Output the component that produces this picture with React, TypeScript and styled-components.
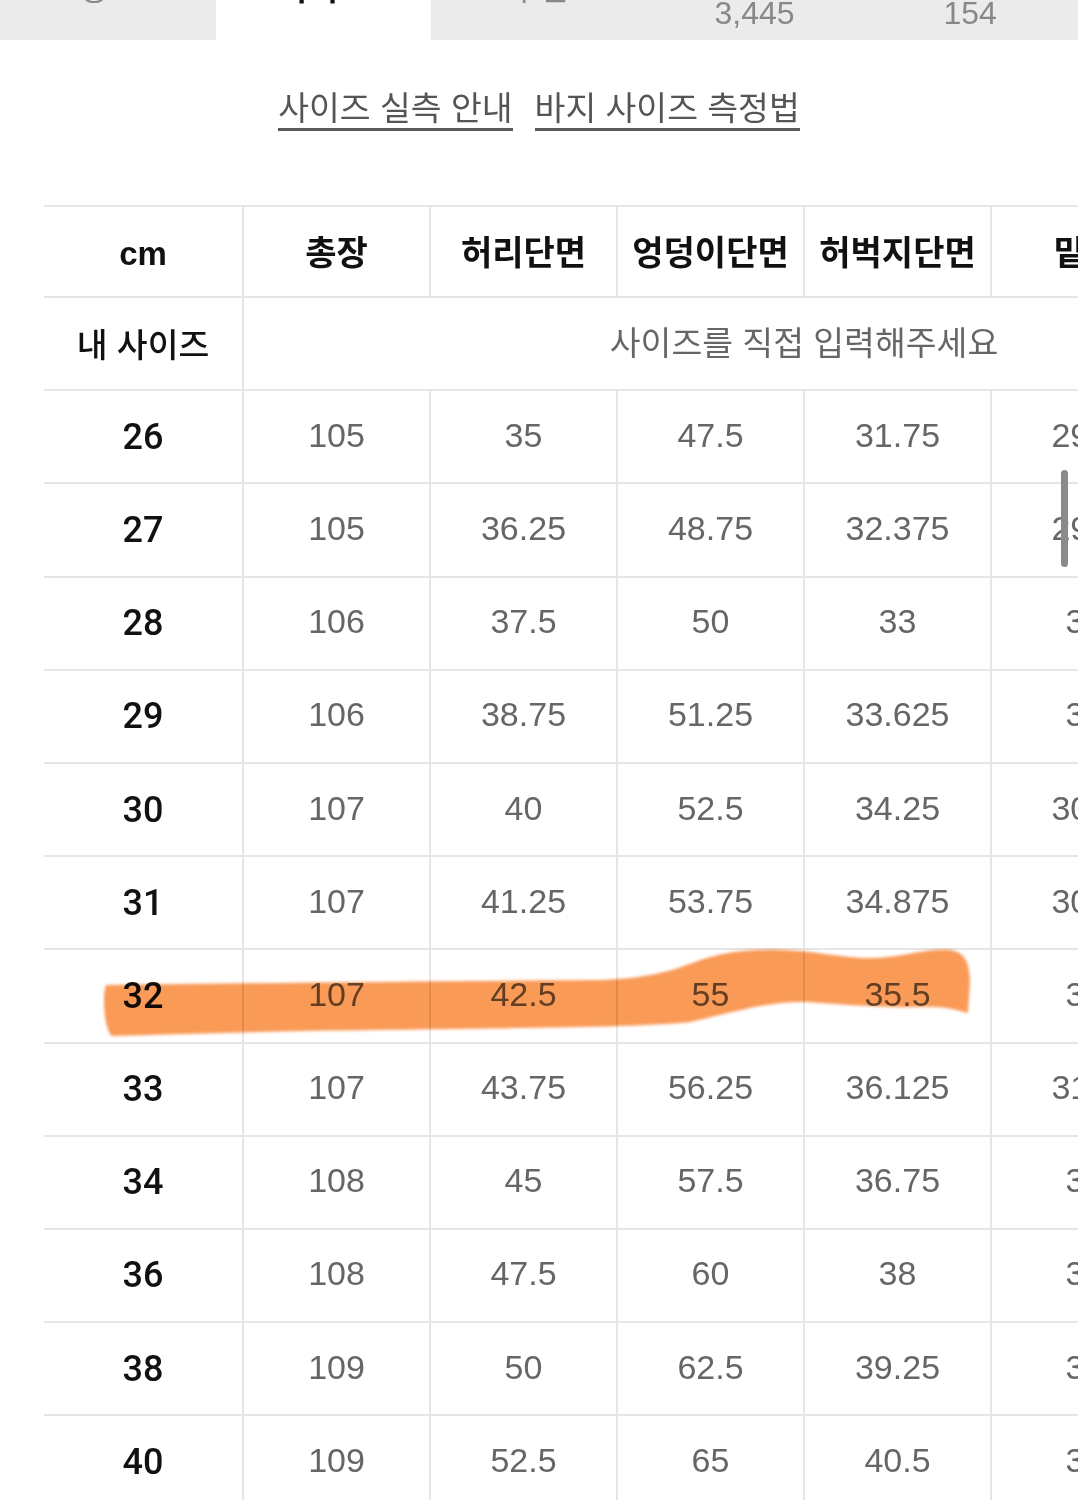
import React from "react";
import styled, { createGlobalStyle } from "styled-components";

const Global = createGlobalStyle`
  html, body { margin: 0; padding: 0; background: #ffffff; }
  * { box-sizing: border-box; }
`;

const FONT = `"Liberation Sans", "Noto Sans CJK KR", sans-serif`;
const LINE = "#e6e6e6";

const Page = styled.div`
  position: relative;
  width: 1078px;
  height: 1500px;
  overflow: hidden;
  background: #fff;
  font-family: ${FONT};
`;

const TabBar = styled.div`
  display: grid;
  grid-template-columns: repeat(5, 1fr);
  height: 40px;
`;

const Tab = styled.div<{ $active?: boolean; $pad: number }>`
  height: 40px;
  overflow: hidden;
  display: flex;
  flex-direction: column;
  justify-content: flex-end;
  align-items: center;
  padding-bottom: ${(p) => p.$pad}px;
  background: ${(p) => (p.$active ? "#ffffff" : "#ebebeb")};
`;

const TabLabel = styled.span<{ $active?: boolean }>`
  font-size: 32px;
  line-height: 30px;
  font-weight: ${(p) => (p.$active ? 700 : 400)};
  color: ${(p) => (p.$active ? "#111" : "#888")};
  white-space: nowrap;
`;

const TabCount = styled.span`
  font-size: 32px;
  line-height: 30px;
  color: #888;
  margin-top: 6px;
`;

const LinkRow = styled.div`
  display: flex;
  justify-content: center;
  align-items: flex-start;
  gap: 22px;
  padding-top: 50px;
  height: 165px;
`;

const GuideLink = styled.a`
  display: inline-block;
  font-size: 33.5px;
  line-height: 38px;
  color: #555;
  text-decoration: none;
  border-bottom: 3px solid #5a5a5a;
  white-space: nowrap;
  cursor: pointer;
`;

const TableScroller = styled.div`
  margin-left: 44px;
  overflow: hidden;
`;

const Grid = styled.div`
  display: grid;
  grid-template-columns: 200px repeat(6, 187px);
  grid-template-rows: 91px;
  grid-auto-rows: 93.2px;
  width: ${200 + 6 * 187}px;
  border-top: 2.5px solid ${LINE};
`;

const Cell = styled.div<{ $span?: number }>`
  display: flex;
  align-items: center;
  justify-content: center;
  border-bottom: 2.5px solid ${LINE};
  border-right: 2.5px solid ${(p) => (p.$span ? "transparent" : LINE)};
  grid-column: ${(p) => (p.$span ? `span ${p.$span}` : "auto")};
  white-space: nowrap;
`;

const HeadText = styled.span`
  font-size: 34px;
  font-weight: 700;
  color: #111;
  margin-top: -3px;
`;

const UnitText = styled.span`
  font-size: 33px;
  font-weight: 700;
  color: #111;
  margin-top: 4px;
`;

const SizeLabel = styled.span`
  font-size: 36px;
  font-family: Roboto, "Noto Sans CJK KR", sans-serif;
  font-weight: 500;
  color: #111;
`;

const MySizeLabel = styled.span`
  font-size: 33.5px;
  font-weight: 500;
  color: #111;
  margin-top: -2px;
`;

const Prompt = styled.span`
  font-size: 33.5px;
  color: #666;
  margin-top: -6px;
`;

const Value = styled.span`
  font-size: 34px;
  color: #666;
  margin-top: -3px;
`;

const ScrollThumb = styled.div`
  position: absolute;
  left: 1061px;
  top: 470px;
  width: 7px;
  height: 97px;
  border-radius: 4px;
  background: #8a8a8a;
`;

const Highlight = styled.svg`
  position: absolute;
  left: 0;
  top: 0;
  width: 1078px;
  height: 1500px;
  pointer-events: none;
  mix-blend-mode: multiply;
`;

const headers = ["총장", "허리단면", "엉덩이단면", "허벅지단면", "밑위", "밑단단면"];

const rows: [string, string[]][] = [
  ["26", ["105", "35", "47.5", "31.75", "29.5", "20"]],
  ["27", ["105", "36.25", "48.75", "32.375", "29.5", "20.5"]],
  ["28", ["106", "37.5", "50", "33", "30", "21"]],
  ["29", ["106", "38.75", "51.25", "33.625", "30", "21.5"]],
  ["30", ["107", "40", "52.5", "34.25", "30.5", "22"]],
  ["31", ["107", "41.25", "53.75", "34.875", "30.5", "22.5"]],
  ["32", ["107", "42.5", "55", "35.5", "31", "23"]],
  ["33", ["107", "43.75", "56.25", "36.125", "31.5", "23.5"]],
  ["34", ["108", "45", "57.5", "36.75", "32", "24"]],
  ["36", ["108", "47.5", "60", "38", "33", "25"]],
  ["38", ["109", "50", "62.5", "39.25", "34", "26"]],
  ["40", ["109", "52.5", "65", "40.5", "35", "27"]],
];

const strokePath =
  "M 106 985 C 250 983, 450 981, 600 980 C 640 979, 670 972, 695 962 " +
  "C 720 953, 745 949, 780 950 C 820 951, 840 958, 870 958 " +
  "C 900 958, 925 948, 950 950 C 965 952, 969 962, 970 980 L 968 1013 " +
  "C 955 1010, 945 1006, 920 1007 C 880 1008, 840 1004, 805 1002 " +
  "C 770 1001, 735 1012, 690 1022 C 640 1028, 500 1028, 300 1031 " +
  "L 112 1036 C 104 1030, 102 995, 106 985 Z";

export default function App() {
  return (
    <Page>
      <Global />
      <TabBar>
        <Tab $pad={36}>
          <TabLabel>정보</TabLabel>
        </Tab>
        <Tab $active $pad={36}>
          <TabLabel $active>사이즈</TabLabel>
        </Tab>
        <Tab $pad={36}>
          <TabLabel>추천</TabLabel>
        </Tab>
        <Tab $pad={12}>
          <TabLabel>후기</TabLabel>
          <TabCount>3,445</TabCount>
        </Tab>
        <Tab $pad={12}>
          <TabLabel>문의</TabLabel>
          <TabCount>154</TabCount>
        </Tab>
      </TabBar>

      <LinkRow>
        <GuideLink>사이즈 실측 안내</GuideLink>
        <GuideLink>바지 사이즈 측정법</GuideLink>
      </LinkRow>

      <TableScroller>
        <Grid>
          <Cell>
            <UnitText>cm</UnitText>
          </Cell>
          {headers.map((h) => (
            <Cell key={h}>
              <HeadText>{h}</HeadText>
            </Cell>
          ))}

          <Cell>
            <MySizeLabel>내 사이즈</MySizeLabel>
          </Cell>
          <Cell $span={6}>
            <Prompt>사이즈를 직접 입력해주세요</Prompt>
          </Cell>

          {rows.map(([size, vals]) => (
            <React.Fragment key={size}>
              <Cell>
                <SizeLabel>{size}</SizeLabel>
              </Cell>
              {vals.map((v, i) => (
                <Cell key={i}>
                  <Value>{v}</Value>
                </Cell>
              ))}
            </React.Fragment>
          ))}
        </Grid>
      </TableScroller>

      <ScrollThumb />

      <Highlight viewBox="0 0 1078 1500">
        <defs>
          <filter id="soft" x="-5%" y="-50%" width="110%" height="200%">
            <feGaussianBlur stdDeviation="1.6" />
          </filter>
        </defs>
        <path d={strokePath} fill="#f99a56" filter="url(#soft)" />
      </Highlight>
    </Page>
  );
}
